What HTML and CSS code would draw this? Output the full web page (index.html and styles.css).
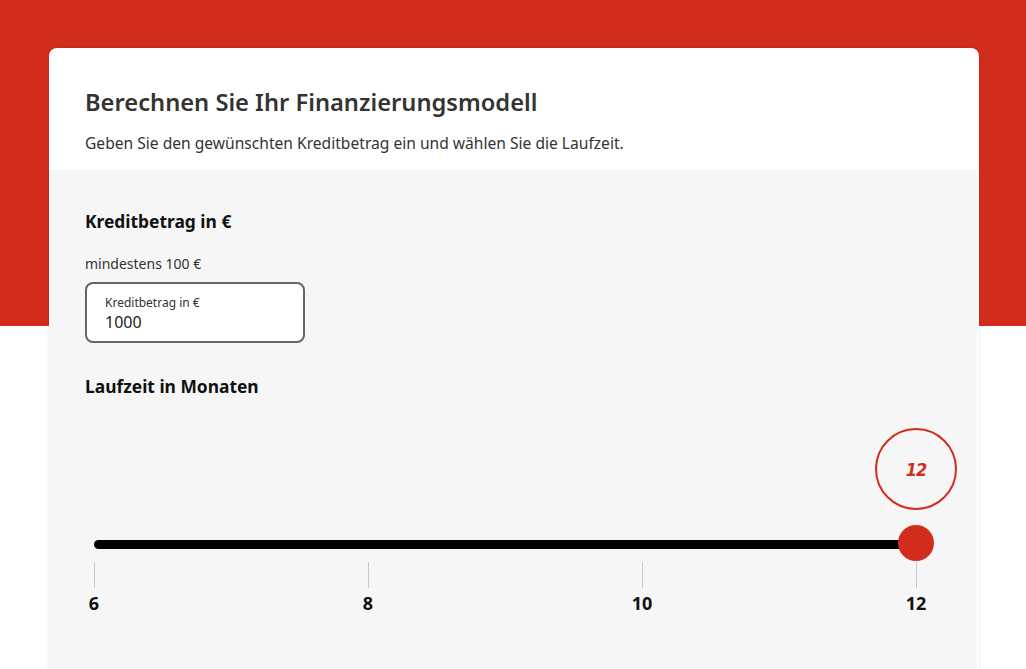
FILE: index.html
```html
<!DOCTYPE html>
<html lang="de">
<head>
<meta charset="utf-8">
<title>Finanzierungsmodell</title>
<link rel="stylesheet" href="styles.css">
</head>
<body>
<div class="card">
  <header class="card-head">
    <h1 class="title">Berechnen Sie Ihr Finanzierungsmodell</h1>
    <p class="lead">Geben Sie den gewünschten Kreditbetrag ein und wählen Sie die Laufzeit.</p>
  </header>
  <section class="calc">
    <h2 class="section-title">Kreditbetrag in €</h2>
    <p class="hint">mindestens 100 €</p>
    <label class="field">
      <span class="field-label">Kreditbetrag in €</span>
      <span class="field-value">1000</span>
    </label>
    <h2 class="section-title section-title--gap">Laufzeit in Monaten</h2>
    <div class="slider">
      <div class="track-row">
        <div class="track"></div>
        <div class="thumb">
          <div class="bubble">12</div>
        </div>
      </div>
      <div class="ticks">
        <div class="tick"><span class="tick-line"></span><span class="tick-label">6</span></div>
        <div class="tick"><span class="tick-line"></span><span class="tick-label">8</span></div>
        <div class="tick"><span class="tick-line"></span><span class="tick-label">10</span></div>
        <div class="tick"><span class="tick-line"></span><span class="tick-label">12</span></div>
      </div>
    </div>
  </section>
</div>
</body>
</html>
```

FILE: styles.css
```css
html, body {
  margin: 0;
  padding: 0;
}
body {
  min-height: 669px;
  background: linear-gradient(to bottom, #d22c1c 0, #d22c1c 326px, #ffffff 326px);
  font-family: "Noto Sans", "Open Sans", sans-serif;
  color: #333;
  overflow: hidden;
}
.card {
  margin: 48px 0 0 49px;
  width: 930px;
  background: #fff;
  border-radius: 8px 8px 0 0;
  box-shadow: 0 0 3px rgba(0,0,0,0.12);
  min-height: 640px;
}
.card-head {
  padding: 38px 36px 0 36px;
  height: 84px;
}
.title {
  margin: 0;
  font-size: 23.7px;
  line-height: 32px;
  font-weight: 600;
  color: #333;
}
.lead {
  margin: 13px 0 0 0;
  font-size: 15.6px;
  line-height: 24px;
  color: #333;
}
.calc {
  background: #f6f6f6;
  margin-right: 2px;
  padding: 39px 36px 60px 36px;
  min-height: 460px;
}
.section-title {
  margin: 0;
  font-size: 17.4px;
  line-height: 24px;
  font-weight: 700;
  color: #111;
}
.section-title--gap {
  margin-top: 31px;
}
.hint {
  margin: 21px 0 0 0;
  font-size: 14px;
  line-height: 20px;
  color: #333;
}
.field {
  margin-top: 8px;
  box-sizing: border-box;
  width: 220px;
  height: 61px;
  border: 2px solid #666;
  border-radius: 8px;
  background: #fff;
  display: flex;
  flex-direction: column;
  padding: 11px 18px 0 18px;
}
.field-label {
  font-size: 12px;
  line-height: 16px;
  color: #333;
}
.field-value {
  font-size: 16px;
  line-height: 22px;
  color: #222;
  margin-top: 0;
}
.slider {
  margin: 128px 25px 0 9px;
}
.track-row {
  position: relative;
  height: 36px;
  display: flex;
  align-items: center;
}
.track {
  flex: 1;
  height: 9px;
  background: #000;
  border-radius: 5px;
}
.thumb {
  position: absolute;
  right: -18px;
  top: -1px;
  width: 36px;
  height: 36px;
  border-radius: 50%;
  background: #d22c1c;
}
.bubble {
  position: absolute;
  left: 50%;
  bottom: calc(100% + 15px);
  transform: translateX(-50%);
  box-sizing: border-box;
  width: 82px;
  height: 82px;
  border: 2px solid #d22c1c;
  border-radius: 50%;
  display: flex;
  align-items: center;
  justify-content: center;
  color: #d22c1c;
  font-family: "DejaVu Sans", sans-serif;
  font-stretch: condensed;
  font-weight: 700;
  font-style: italic;
  font-size: 18px;
  letter-spacing: -1px;
}
.ticks {
  display: flex;
  justify-content: space-between;
}
.tick {
  width: 0;
  display: flex;
  flex-direction: column;
  align-items: center;
}
.tick-line {
  display: block;
  width: 1px;
  height: 26px;
  background: #c8c8c8;
}
.tick-label {
  margin-top: 3px;
  font-size: 18px;
  line-height: 24px;
  font-weight: 700;
  color: #111;
}
```
